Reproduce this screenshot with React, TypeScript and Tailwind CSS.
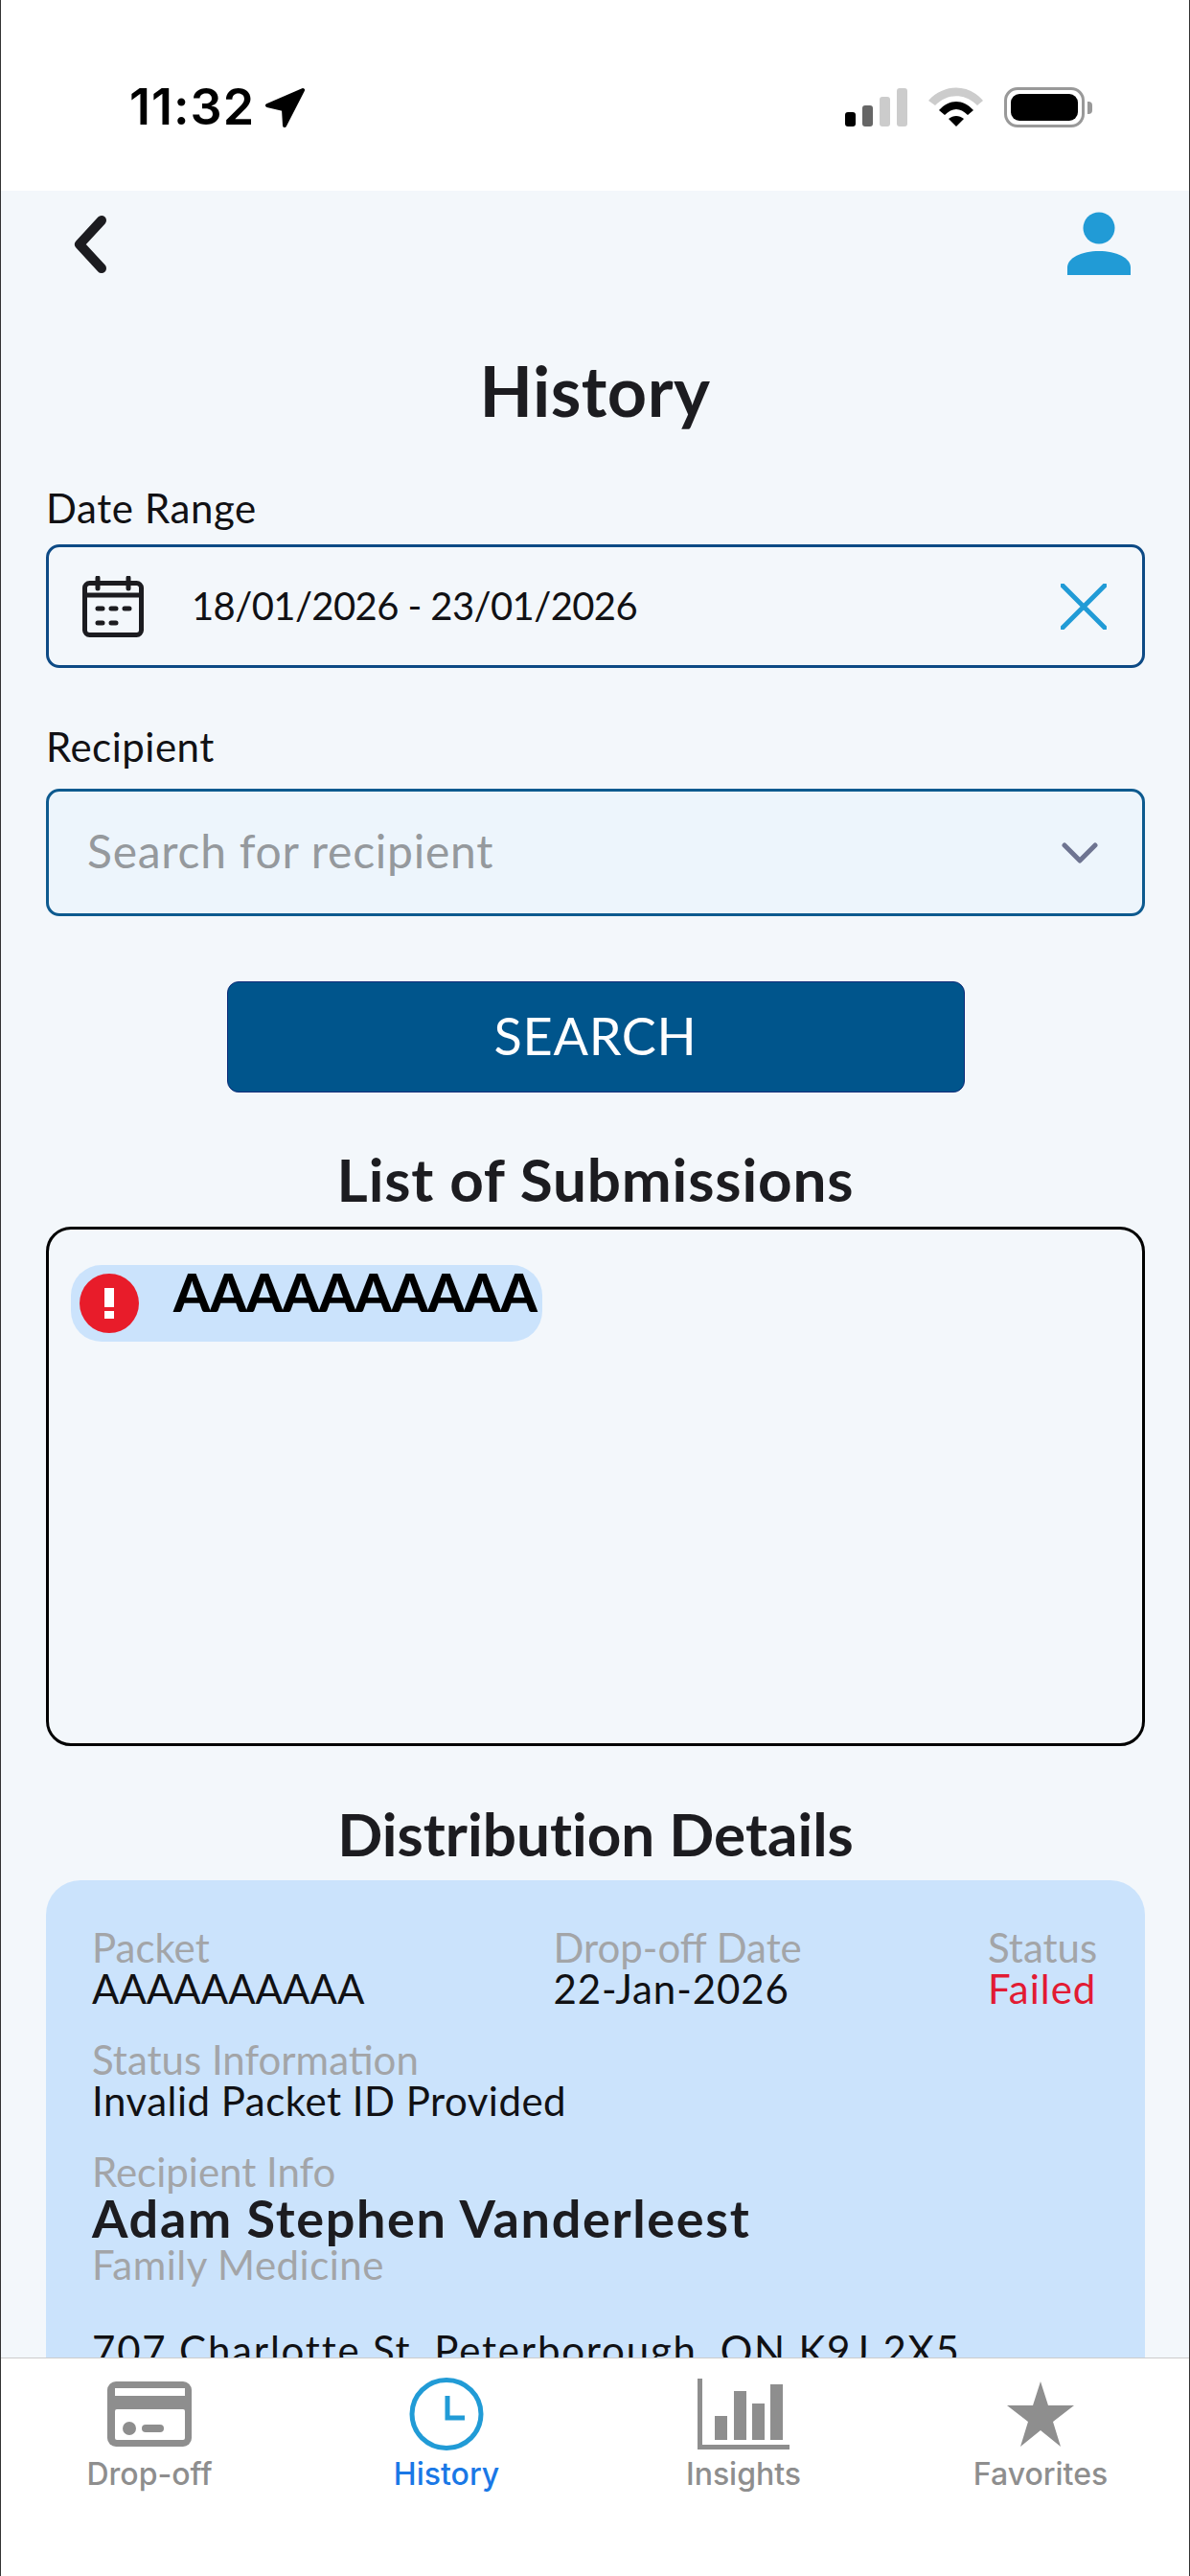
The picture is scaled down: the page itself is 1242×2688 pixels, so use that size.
import React from 'react';

const fieldLabel = 'text-[42px] leading-[43px] text-[#a3a5a8]';
const fieldValue = 'text-[42px] leading-[43px] text-[#111114] [font-variant-ligatures:none]';

const StatusIcons = () => (
    <div className="flex items-start">
        <svg width="66" height="42" viewBox="0 0 66 42" className="mt-px">
            <rect x="0" y="25" width="11" height="15" rx="3" fill="#000" />
            <rect x="18" y="18" width="11" height="22" rx="3" fill="#666" />
            <rect x="36" y="9" width="11" height="31" rx="3" fill="#ccc" />
            <rect x="54" y="0" width="11" height="40" rx="3" fill="#ccc" />
        </svg>
        <svg width="58" height="42" viewBox="0 0 58 42" className="ml-[21px]">
            <path d="M0 14 C16 -4 42 -4 57 14 L51 19 C38 6 20 6 7 19 Z" fill="#ccc" />
            <path d="M11 24 C22 12 36 12 47 24 L41 29 C33 21 25 21 17 29 Z" fill="#000" />
            <path d="M21 33 C26 29 32 29 37 33 L29 41 Z" fill="#000" />
        </svg>
        <div className="ml-[21px] w-[84px] h-[42px] rounded-[14px] border-[3px] border-[#999] p-1">
            <div className="w-full h-full rounded-[9px] bg-black" />
        </div>
        <div className="ml-[3px] mt-[15px] w-[5px] h-[13px] rounded-r-[4px] bg-[#999]" />
    </div>
);

const SectionTitle = ({ children, className }: { children: string; className: string }) => (
    <h2 className={`text-center text-[62px] leading-[70px] font-bold text-[#1c1c20] [font-variant-ligatures:none] ${className}`}>
        {children}
    </h2>
);

const TabItem = ({ label, icon, active }: { label: string; icon: React.ReactNode; active?: boolean }) => (
    <div className="flex flex-col items-center">
        <div className="h-[76px] flex items-center justify-center">{icon}</div>
        <span
            className={`mt-[7px] text-[32px] leading-[36px] font-medium ${active ? 'text-[#1a78e6]' : 'text-[#8e8e8e]'}`}
            style={{ fontFamily: 'Inter, sans-serif' }}
        >
            {label}
        </span>
    </div>
);

const App = () => {
    return (
        <div
            className="w-[1242px] h-[2688px] flex flex-col overflow-hidden border-x border-[#333] bg-[#f3f7fb]"
            style={{ fontFamily: 'Lato, sans-serif' }}
        >
            {/* status bar */}
            <div className="h-[199px] shrink-0 bg-white pt-[91px] pl-[134px] pr-[101px] flex justify-between items-start">
                <div className="flex items-center">
                    <span
                        className="text-[52px] leading-[42px] font-semibold text-black tracking-[1px]"
                        style={{ fontFamily: 'Inter, sans-serif' }}
                    >
                        11:32
                    </span>
                    <svg width="42" height="42" viewBox="0 0 42 42" className="ml-[10px]">
                        <path d="M40 3 L3 19 L20 23 L21 40 Z" fill="#000" stroke="#000" strokeWidth="4" strokeLinejoin="round" />
                    </svg>
                </div>
                <StatusIcons />
            </div>

            <div className="flex-1 overflow-hidden">
                {/* top nav */}
                <div className="flex justify-between items-start pt-[22px] pl-[75px] pr-[61px]">
                    <svg width="36" height="60" viewBox="0 0 36 60" className="mt-1">
                        <path d="M30 5 L7 30 L30 55" fill="none" stroke="#1c1c20" strokeWidth="10" strokeLinecap="round" strokeLinejoin="round" />
                    </svg>
                    <svg width="66" height="66" viewBox="0 0 66 66">
                        <circle cx="33" cy="17" r="16.5" fill="#219bd6" />
                        <path d="M0 66 L0 58 C0 48 15 41 33 41 C51 41 66 48 66 58 L66 66 Z" fill="#219bd6" />
                    </svg>
                </div>

                <h1 className="mt-[80px] text-center text-[72px] leading-[80px] font-bold tracking-[0.5px] text-[#1c1c20]">History</h1>

                <div className="pl-[47px] pr-[46px]">
                    <label className="block mt-[59px] text-[42px] leading-[48px] tracking-[0.6px] text-[#111114]">Date Range</label>
                    <div className="mt-[14px] h-[129px] rounded-[14px] border-[3px] border-[#0d4a85] flex items-center pl-[35px] pr-[37px]">
                        <svg width="64" height="64" viewBox="0 0 64 64">
                            <rect x="2.5" y="7.5" width="59" height="54" rx="5" fill="none" stroke="#1c1c20" strokeWidth="5" />
                            <path d="M2 20 L62 20" stroke="#1c1c20" strokeWidth="5" />
                            <path d="M16 2 L16 13 M48 2 L48 13" stroke="#1c1c20" strokeWidth="5" strokeLinecap="round" />
                            <path d="M16 34 L21 34 M30 34 L35 34 M44 34 L49 34 M16 49 L21 49 M30 49 L35 49" stroke="#1c1c20" strokeWidth="5" strokeLinecap="round" />
                        </svg>
                        <span className="ml-[50px] -mt-[2px] text-[40px] leading-[48px] tracking-[-0.6px] text-[#111114]">18/01/2026 - 23/01/2026</span>
                        <svg width="48" height="48" viewBox="0 0 48 48" className="ml-auto">
                            <path d="M2 2 L46 46 M46 2 L2 46" fill="none" stroke="#219bd6" strokeWidth="5" strokeLinecap="round" />
                        </svg>
                    </div>

                    <label className="block mt-[58px] text-[42px] leading-[48px] tracking-[0.5px] text-[#111114]">Recipient</label>
                    <div className="mt-[20px] h-[133px] rounded-[14px] border-[3px] border-[#0d5a8f] bg-[#edf5fc] flex items-center pl-[40px] pr-[46px]">
                        <span className="-mt-[3px] text-[48px] leading-[54px] tracking-[0.75px] text-[#95999d]">Search for recipient</span>
                        <svg width="38" height="22" viewBox="0 0 38 22" className="ml-auto">
                            <path d="M3 3 L19 19 L35 3" fill="none" stroke="#6e7491" strokeWidth="5" strokeLinecap="round" strokeLinejoin="round" />
                        </svg>
                    </div>

                    <button className="block mx-auto mt-[68px] w-[770px] h-[116px] pb-[3px] rounded-[12px] border border-[#0b2a78] bg-[#00558c] text-white text-[54px] leading-[60px] tracking-[0.7px]">
                        SEARCH
                    </button>

                    <SectionTitle className="mt-[55px] tracking-[0.85px]">List of Submissions</SectionTitle>

                    <div className="mt-[15px] h-[542px] rounded-[26px] border-[3px] border-black pt-[37px] pl-[23px]">
                        <div className="w-[492px] h-[80px] rounded-[32px] bg-[#cbe3fc] flex items-start pl-[9px] pt-[9px]">
                            <div className="w-[62px] h-[62px] rounded-full bg-[#e81c2a] flex items-center justify-center">
                                <svg width="10" height="32" viewBox="0 0 10 32">
                                    <rect x="0" y="0" width="10" height="20" fill="#fff" />
                                    <rect x="0" y="24" width="10" height="8" fill="#fff" />
                                </svg>
                            </div>
                            <span className="ml-[36px] -mt-[5px] text-[55px] leading-[48px] font-black tracking-[-0.7px] text-black">AAAAAAAAAA</span>
                        </div>
                    </div>

                    <SectionTitle className="mt-[56px]">Distribution Details</SectionTitle>

                    <div className="mt-[14px] rounded-t-[36px] bg-[#cbe3fc] pt-[49px] pl-[48px] pr-[50px] pb-10">
                        <div className="flex justify-between">
                            <div className="w-[480px]">
                                <div className={fieldLabel}>Packet</div>
                                <div className={fieldValue}>AAAAAAAAAA</div>
                            </div>
                            <div className="w-[452px]">
                                <div className={fieldLabel}>Drop-off Date</div>
                                <div className={`${fieldValue} tracking-[0.9px]`}>22-Jan-2026</div>
                            </div>
                            <div className="w-[114px]">
                                <div className={fieldLabel}>Status</div>
                                <div className="text-[42px] leading-[43px] tracking-[1px] text-[#e21b33]">Failed</div>
                            </div>
                        </div>
                        <div className="mt-[31px]">
                            <div className={fieldLabel}>Status Information</div>
                            <div className={`${fieldValue} tracking-[0.5px]`}>Invalid Packet ID Provided</div>
                        </div>
                        <div className="mt-[31px]">
                            <div className={fieldLabel}>Recipient Info</div>
                            <div className="text-[54px] leading-[54px] font-bold tracking-[1.65px] text-[#1c1c20]">Adam Stephen Vanderleest</div>
                            <div className="text-[42px] leading-[43px] tracking-[0.5px] text-[#a3a5a8]">Family Medicine</div>
                        </div>
                        <div className={`mt-[46px] whitespace-nowrap ${fieldValue} tracking-[1.8px]`}>707 Charlotte St, Peterborough, ON K9J 2X5</div>
                    </div>
                </div>
            </div>

            {/* tab bar */}
            <div className="h-[228px] shrink-0 bg-white border-t border-[#ccc] pt-[20px] grid grid-cols-4">
                <TabItem
                    label="Drop-off"
                    icon={
                        <svg width="88" height="68" viewBox="0 0 88 68">
                            <rect width="88" height="68" rx="9" fill="#8e8e8e" />
                            <rect x="8" y="7" width="73" height="8" fill="#fff" />
                            <rect x="8" y="29" width="73" height="32" rx="2" fill="#fff" />
                            <circle cx="23" cy="49" r="7" fill="#8e8e8e" />
                            <rect x="36" y="45" width="23" height="8" rx="4" fill="#8e8e8e" />
                        </svg>
                    }
                />
                <TabItem
                    label="History"
                    active
                    icon={
                        <svg width="78" height="76" viewBox="0 0 78 76">
                            <ellipse cx="39" cy="38" rx="36" ry="35.5" fill="none" stroke="#219bd6" strokeWidth="5" />
                            <path d="M40 19 L40 42 L58 42" fill="none" stroke="#219bd6" strokeWidth="5" />
                        </svg>
                    }
                />
                <TabItem
                    label="Insights"
                    icon={
                        <svg width="96" height="74" viewBox="0 0 96 74">
                            <path d="M2.5 0 L2.5 71.5 L96 71.5" fill="none" stroke="#8e8e8e" strokeWidth="5" />
                            <g fill="#8e8e8e">
                                <rect x="18" y="39" width="13" height="25" />
                                <rect x="38" y="13" width="13" height="51" />
                                <rect x="57" y="26" width="13" height="38" />
                                <rect x="76" y="6" width="13" height="58" />
                            </g>
                        </svg>
                    }
                />
                <TabItem
                    label="Favorites"
                    icon={
                        <svg width="70" height="68" viewBox="0 0 70 68">
                            <path d="M35 0 L43 25 L70 25 L48 42 L56 68 L35 51 L14 68 L22 42 L0 25 L27 25 Z" fill="#8e8e8e" />
                        </svg>
                    }
                />
            </div>
        </div>
    );
};

export default App;
